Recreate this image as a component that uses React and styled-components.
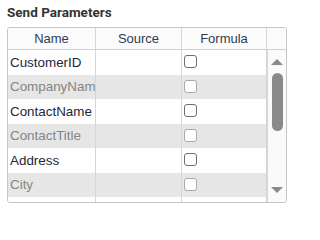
import React from "react";
import styled, { createGlobalStyle } from "styled-components";

const Global = createGlobalStyle`
  html, body { margin: 0; padding: 0; background: #ffffff; }
  body { font-family: "Liberation Sans", Arial, sans-serif; }
`;

const Page = styled.div`
  width: 296px;
  height: 208px;
  padding: 4px 0 0 7px;
  box-sizing: border-box;
`;

const Title = styled.div`
  font-family: Roboto, "Liberation Sans", sans-serif;
  font-weight: 700;
  font-size: 13.5px;
  line-height: 16px;
  color: #333333;
  height: 23px;
`;

const Table = styled.div`
  width: 280px;
  height: 176px;
  border: 1px solid #c6c6c6;
  border-radius: 3px;
  box-sizing: border-box;
  overflow: hidden;
  display: flex;
  flex-direction: column;
`;

const cols = "87px 85px 84px 19px";

const HeaderRow = styled.div`
  display: grid;
  grid-template-columns: ${cols};
  column-gap: 1px;
  background: #d6d6d6;
  border-bottom: 1px solid #d0d0d0;
  height: 21px;
  flex: none;
`;

const HeaderCell = styled.div`
  background: #fbfbfb;
  display: flex;
  align-items: center;
  justify-content: center;
  font-size: 13px;
  color: #2f3a52;
`;

const Body = styled.div`
  flex: 1;
  display: flex;
  min-height: 0;
`;

const Rows = styled.div`
  width: 259px;
  overflow: hidden;
  display: flex;
  flex-direction: column;
`;

const Row = styled.div`
  display: grid;
  grid-template-columns: 87px 85px 84px;
  column-gap: 1px;
  background: #d6d6d6;
  height: 24.5px;
  flex: none;
`;

const Cell = styled.div`
  background: ${(p) => (p.$alt ? "#e6e6e6" : "#ffffff")};
  display: flex;
  align-items: center;
  padding-left: 2px;
  font-size: 13.4px;
  color: ${(p) => (p.$alt ? "#858585" : "#1c2740")};
  white-space: nowrap;
  overflow: hidden;
`;

const Box = styled.span`
  width: 13px;
  height: 13px;
  box-sizing: border-box;
  border: 1px solid ${(p) => (p.$alt ? "#a9a9a9" : "#6e6e6e")};
  border-radius: 3px;
  background: #ffffff;
  margin-top: -1px;
`;

const Scrollbar = styled.div`
  width: 19px;
  border-left: 1px solid #d6d6d6;
  background: #fafafa;
  display: flex;
  flex-direction: column;
  align-items: center;
  padding-top: 9px;
  box-sizing: border-box;
`;

const Thumb = styled.div`
  width: 11px;
  height: 58px;
  border-radius: 5.5px;
  background: #8a8a8a;
  margin-top: 8px;
`;

const Spacer = styled.div`
  flex: 1;
`;

const Arrow = styled.svg`
  width: 12px;
  height: 6px;
  display: block;
  flex: none;
  margin-bottom: ${(p) => p.$mb || 0}px;
`;

const data = [
  "CustomerID",
  "CompanyName",
  "ContactName",
  "ContactTitle",
  "Address",
  "City",
  "",
];

export default function App() {
  return (
    <>
      <Global />
      <Page>
        <Title>Send Parameters</Title>
        <Table>
          <HeaderRow>
            <HeaderCell>Name</HeaderCell>
            <HeaderCell>Source</HeaderCell>
            <HeaderCell>Formula</HeaderCell>
            <HeaderCell />
          </HeaderRow>
          <Body>
            <Rows>
              {data.map((name, i) => {
                const alt = i % 2 === 1;
                return (
                  <Row key={i}>
                    <Cell $alt={alt}>{name}</Cell>
                    <Cell $alt={alt} />
                    <Cell $alt={alt}>
                      {name && <Box $alt={alt} />}
                    </Cell>
                  </Row>
                );
              })}
            </Rows>
            <Scrollbar>
              <Arrow viewBox="0 0 12 6">
                <polygon points="0,6 12,6 6,0" fill="#8a8a8a" />
              </Arrow>
              <Thumb />
              <Spacer />
              <Arrow viewBox="0 0 12 6" $mb={9}>
                <polygon points="0,0 12,0 6,6" fill="#8a8a8a" />
              </Arrow>
            </Scrollbar>
          </Body>
        </Table>
      </Page>
    </>
  );
}
